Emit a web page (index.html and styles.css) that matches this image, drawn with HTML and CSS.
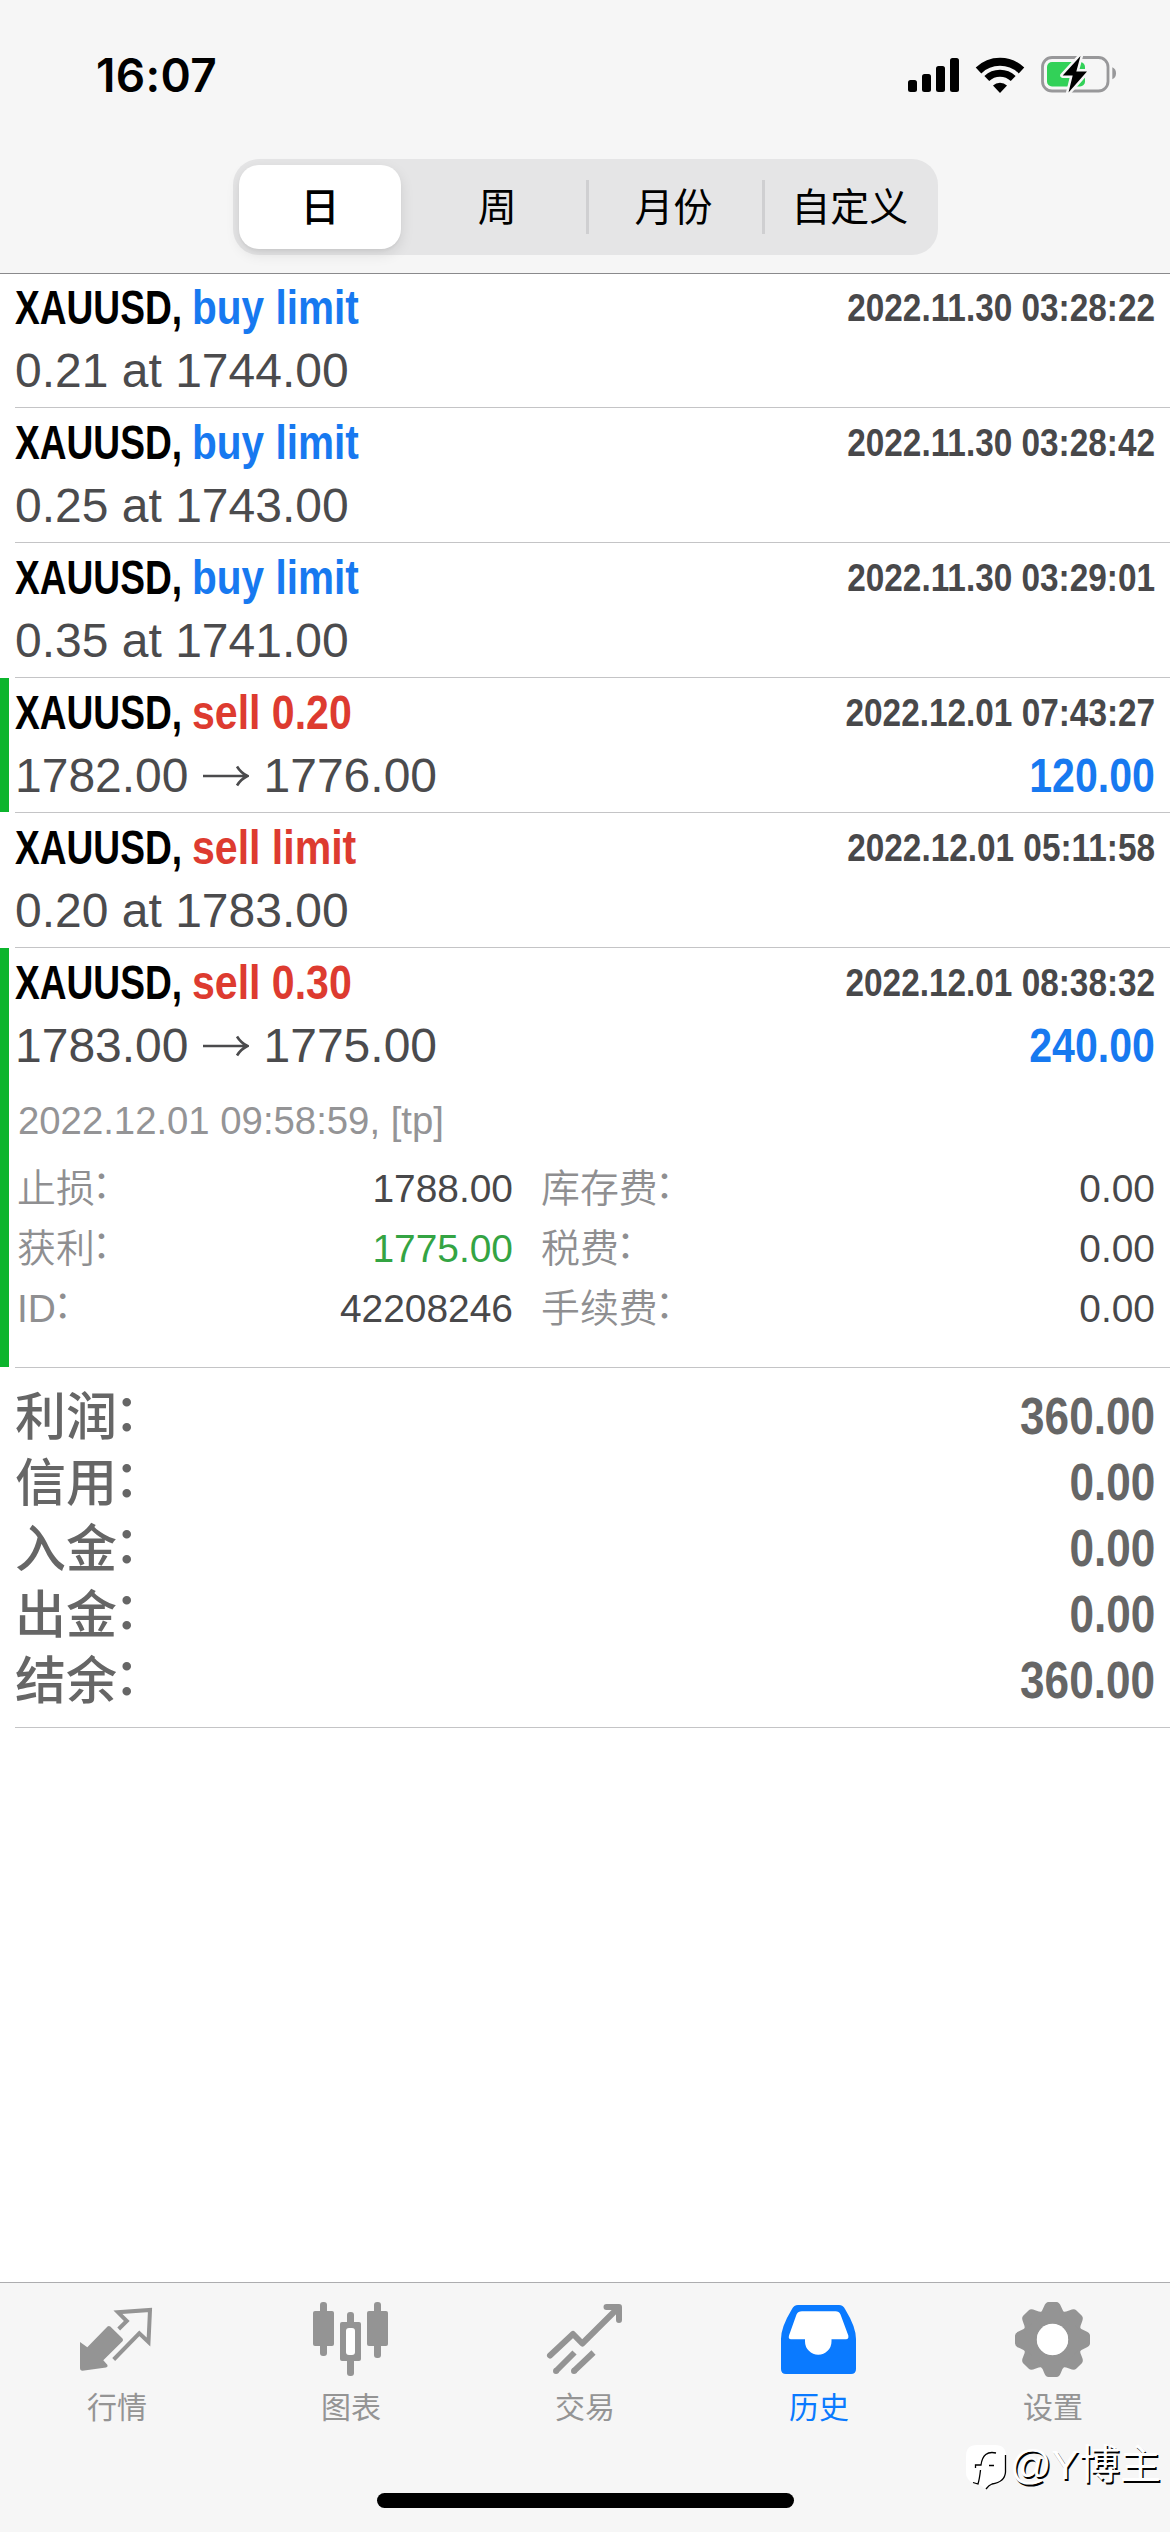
FILE: index.html
```html
<!DOCTYPE html>
<html lang="zh-CN">
<head>
<meta charset="utf-8">
<title>历史</title>
<link rel="stylesheet" href="styles.css">
</head>
<body>
<div class="screen">
  <header class="header">
    <div class="status">
      <span class="clock">16:07</span>
      <div class="status-icons">
        <svg class="signal" viewBox="0 0 52 36" width="52" height="36"><rect x="0" y="23" width="9" height="12" rx="2.5"/><rect x="14" y="17" width="9" height="18" rx="2.5"/><rect x="28" y="9" width="9" height="26" rx="2.5"/><rect x="42" y="1" width="9" height="34" rx="2.5"/></svg>
        <svg class="wifi" viewBox="0 0 50 38" width="50" height="38"><path d="M3.5 14.5A31 31 0 0 1 46.500 14.500" fill="none" stroke="#000" stroke-width="8"/><path d="M11.800 22.500A19 19 0 0 1 38.200 22.500" fill="none" stroke="#000" stroke-width="7"/><path d="M18 29.500A10 10 0 0 1 32 29.500L25 37Z"/></svg>
        <svg class="battery" viewBox="0 0 80 42" width="80" height="42"><rect x="3.500" y="3.500" width="65.500" height="33.500" rx="9.500" fill="none" stroke="#98989a" stroke-width="2.800"/><rect x="8" y="8" width="38" height="24.500" rx="5" fill="#32d158"/><path d="M73.300 13.300C78.300 15 78.300 23.600 73.300 25.300Z" fill="#98989a"/><path d="M41.500 2L23.700 21.500H33.700L29.500 38.500L48 17.500H37.300Z" stroke="#f6f6f6" stroke-width="5" stroke-linejoin="round"/><path d="M41.500 2L23.700 21.500H33.700L29.500 38.500L48 17.500H37.300Z"/></svg>
      </div>
    </div>
    <nav class="segments">
      <span class="segment selected">日</span>
      <span class="segment">周</span>
      <span class="segment divided">月份</span>
      <span class="segment divided">自定义</span>
    </nav>
  </header>

  <main class="content">
    <article class="deal first">
      <div class="body">
        <div class="line top"><span class="symbol">XAUUSD,</span><span class="kind buy">buy limit</span><time>2022.11.30 03:28:22</time></div>
        <div class="line price">0.21 at 1744.00</div>
      </div>
    </article>
    <article class="deal">
      <div class="body">
        <div class="line top"><span class="symbol">XAUUSD,</span><span class="kind buy">buy limit</span><time>2022.11.30 03:28:42</time></div>
        <div class="line price">0.25 at 1743.00</div>
      </div>
    </article>
    <article class="deal">
      <div class="body">
        <div class="line top"><span class="symbol">XAUUSD,</span><span class="kind buy">buy limit</span><time>2022.11.30 03:29:01</time></div>
        <div class="line price">0.35 at 1741.00</div>
      </div>
    </article>
    <article class="deal won">
      <div class="body">
        <div class="line top"><span class="symbol">XAUUSD,</span><span class="kind sell">sell 0.20</span><time>2022.12.01 07:43:27</time></div>
        <div class="line price"><span>1782.00</span><svg class="arrow" viewBox="0 0 46 24" width="46" height="24"><path d="M0 12H44M34 2.500Q38 9 44.500 12Q38 15 34 21.500"/></svg><span>1776.00</span><b class="profit">120.00</b></div>
      </div>
    </article>
    <article class="deal">
      <div class="body">
        <div class="line top"><span class="symbol">XAUUSD,</span><span class="kind sell">sell limit</span><time>2022.12.01 05:11:58</time></div>
        <div class="line price">0.20 at 1783.00</div>
      </div>
    </article>
    <article class="deal won open">
      <div class="body">
        <div class="line top"><span class="symbol">XAUUSD,</span><span class="kind sell">sell 0.30</span><time>2022.12.01 08:38:32</time></div>
        <div class="line price"><span>1783.00</span><svg class="arrow" viewBox="0 0 46 24" width="46" height="24"><path d="M0 12H44M34 2.500Q38 9 44.500 12Q38 15 34 21.500"/></svg><span>1775.00</span><b class="profit">240.00</b></div>
        <div class="closed">2022.12.01 09:58:59, [tp]</div>
        <dl class="details">
          <div><dt>止损<i>：</i></dt><dd>1788.00</dd></div>
          <div><dt>库存费<i>：</i></dt><dd>0.00</dd></div>
          <div><dt>获利<i>：</i></dt><dd class="hit">1775.00</dd></div>
          <div><dt>税费<i>：</i></dt><dd>0.00</dd></div>
          <div><dt>ID<i>：</i></dt><dd>42208246</dd></div>
          <div><dt>手续费<i>：</i></dt><dd>0.00</dd></div>
        </dl>
      </div>
    </article>
    <dl class="totals">
      <div><dt>利润<i>：</i></dt><dd>360.00</dd></div>
      <div><dt>信用<i>：</i></dt><dd>0.00</dd></div>
      <div><dt>入金<i>：</i></dt><dd>0.00</dd></div>
      <div><dt>出金<i>：</i></dt><dd>0.00</dd></div>
      <div><dt>结余<i>：</i></dt><dd>360.00</dd></div>
    </dl>
  </main>

  <footer class="footer">
    <nav class="tabs">
      <a class="tab">
        <svg viewBox="0 0 80 80" width="80" height="80"><path d="M3 42L10.300 47.300L30.500 26.500Q31.900 25.300 33.300 26.500L45.500 38.500Q46.600 40 45.500 41.300L26.300 60.300L30.500 65Q31 67 29 67.500L5.500 70.700Q3 70.700 3 68Z" fill="currentColor"/><path d="M41.700 29L49.800 21L41 12.300L73 10L71.500 42L62.300 33.300L36.700 59.500" fill="none" stroke="currentColor" stroke-width="4"/></svg>
        <span>行情</span>
      </a>
      <a class="tab">
        <svg viewBox="0 0 80 80" width="80" height="80" fill="currentColor"><rect x="9" y="2" width="7" height="54" rx="3"/><rect x="2" y="11" width="21" height="35" rx="2"/><rect x="63" y="2" width="7" height="56" rx="3"/><rect x="56" y="11" width="21" height="35" rx="2"/><rect x="36" y="12" width="7" height="20" rx="3"/><rect x="36" y="56" width="7" height="20" rx="3"/><rect x="29" y="22" width="21" height="39" rx="2"/><rect x="35" y="28" width="9" height="27" rx="3" fill="#fff"/></svg>
        <span>图表</span>
      </a>
      <a class="tab">
        <svg viewBox="0 0 80 80" width="80" height="80" fill="none" stroke="currentColor" stroke-width="6" stroke-linejoin="round"><path d="M5 55.500L28 34L37.300 43.500L73 8" stroke-linecap="round"/><path d="M61.500 7H74V20" stroke-linecap="round"/><path d="M11 71L29.500 52.500M29 71L48.500 52.500"/><path d="M11 71h.01M29 71h.01" stroke-linecap="round"/></svg>
        <span>交易</span>
      </a>
      <a class="tab active">
        <svg viewBox="0 0 80 80" width="80" height="80"><path d="M19 5H60Q64 5 66 9Q77 27 77 39V69Q77 74 72 74H7Q2 74 2 69V39Q2 27 13 9Q15 5 19 5Z" fill="currentColor"/><path d="M23 11.300H56.500Q60 11.300 61.500 14.500L69.300 35.500Q70 39.300 67 39.300H52.500V41.500A13.200 13.200 0 0 1 26 41.500V39.300H12Q9 39.300 10 35.500L17.500 14.500Q19 11.300 23 11.300Z" fill="#fff"/></svg>
        <span>历史</span>
      </a>
      <a class="tab">
        <svg viewBox="-39.500 -39.500 80 80" width="80" height="80" fill="currentColor"><defs><path id="tooth" d="M-13 -26Q-10 -28.500 -8.500 -33Q-6.800 -37.500 -4 -37.500H4Q6.800 -37.500 8.500 -33Q10 -28.500 13 -26Z"/></defs><circle r="22.500" fill="none" stroke="currentColor" stroke-width="14"/><use href="#tooth"/><use href="#tooth" transform="rotate(45)"/><use href="#tooth" transform="rotate(90)"/><use href="#tooth" transform="rotate(135)"/><use href="#tooth" transform="rotate(180)"/><use href="#tooth" transform="rotate(225)"/><use href="#tooth" transform="rotate(270)"/><use href="#tooth" transform="rotate(315)"/><circle r="15.700" fill="#fff"/></svg>
        <span>设置</span>
      </a>
    </nav>
    <div class="home-bar"></div>
    <div class="watermark">
      <svg viewBox="0 0 42 48" width="42" height="48"><path d="M12 2H30Q41 2 41 13V29Q41 41 27 42L20 46L14 41Q1 40 1 29V13Q1 2 12 2Z" fill="#fff"/><path d="M40.500 12V29Q40 39 27 41Q24 42 21 46M31 10Q18 7 16 22H10.500V25M24 22.500H29M15.500 27Q14.500 36 13 41L8 39.500" fill="none" stroke="#000" stroke-width="1.300"/></svg>
      <span>@Y博主</span>
    </div>
  </footer>
</div>
</body>
</html>
```

FILE: styles.css
```css
* { box-sizing: border-box; }

body {
  margin: 0;
  background: #fff;
  font-family: "Liberation Sans", "Noto Sans CJK SC", sans-serif;
}

dl, dd { margin: 0; }

.screen {
  display: flex;
  flex-direction: column;
  width: 1170px;
  height: 2532px;
  overflow: hidden;
}

/* header */
.header {
  height: 274px;
  background: #f6f6f6;
  border-bottom: 1px solid #8a8a8c;
}

.status {
  display: flex;
  justify-content: space-between;
  align-items: center;
  height: 159px;
  padding: 0 51px 9px 96px;
}

.clock {
  font: 600 46px/50px Inter, sans-serif;
  letter-spacing: 0.3px;
}

.status-icons {
  display: flex;
  align-items: center;
}

.signal { margin-right: 15px; }
.wifi { margin-right: 14px; }

.segments {
  display: grid;
  grid-template-columns: repeat(4, 1fr);
  width: 705px;
  height: 96px;
  margin-left: 233px;
  border-radius: 26px;
  background: #e5e5e6;
}

.segment {
  display: flex;
  justify-content: center;
  align-items: center;
  padding-top: 2px;
  font-size: 39px;
  line-height: 60px;
}

.selected {
  margin: 6px 8px 6px 6px;
  border-radius: 20px;
  background: #fff;
  font-weight: 500;
  box-shadow: 0 5px 14px rgba(0, 0, 0, 0.1), 0 2px 3px rgba(0, 0, 0, 0.04);
}

.divided {
  background: linear-gradient(#cfcfd1, #cfcfd1) left center / 3px 54px no-repeat;
}

/* deals */
.content { flex: 1; }

.deal {
  display: flex;
  height: 135px;
  padding-left: 15px;
}

.deal.first { height: 134px; }

.won {
  background: linear-gradient(#0cb52d, #0cb52d) left top / 9px calc(100% - 1px) no-repeat;
}

.deal.open { height: 420px; }

.body {
  flex: 1;
  padding: 4px 15px 0 0;
  border-bottom: 1px solid #c4c4c6;
}

.first .body { padding-top: 3px; }

.line {
  display: flex;
  align-items: center;
  white-space: nowrap;
}

.top {
  height: 62px;
  font-size: 48px;
  line-height: 62px;
  font-weight: 700;
}

.symbol {
  width: 177px;
  transform: scaleX(0.773);
  transform-origin: left;
}

.kind {
  transform: scaleX(0.845);
  transform-origin: left;
}

.buy { color: #1779f0; }

.sell {
  color: #dd3b30;
  transform: scaleX(0.855);
}

time {
  margin-left: auto;
  color: #48484a;
  font-size: 39px;
  transform: scaleX(0.855);
  transform-origin: right;
}

.price {
  height: 64px;
  color: #4b4b4d;
  font-size: 48px;
  line-height: 64px;
}

.arrow {
  margin: 0 15px 0 14px;
  fill: none;
  stroke: #4b4b4d;
  stroke-width: 2.6;
}

.profit {
  margin-left: auto;
  color: #1779f0;
  transform: scaleX(0.855);
  transform-origin: right;
}

.closed {
  margin: 13px 0 8px 3px;
  color: #949496;
  font-size: 38.3px;
  line-height: 60px;
}

.details {
  display: grid;
  grid-template-columns: 496px 614px;
  column-gap: 28px;
  margin-left: 2px;
  font-size: 38.9px;
  line-height: 60px;
}

.details div, .totals div {
  display: flex;
  justify-content: space-between;
}

dt i {
  display: inline-block;
  font-style: normal;
  transform: translate(-3px, -4px);
}

.details dt {
  color: #8f8f91;
  font-weight: 350;
}

.details dd { color: #48484a; }
.details .hit { color: #34a443; }

.totals {
  height: 360px;
  margin-left: 15px;
  padding: 16px 15px 0 0;
  border-bottom: 1px solid #c4c4c6;
  color: #666;
  font-size: 51px;
  font-weight: 700;
  line-height: 66px;
}

.totals div { height: 66px; }

.totals dt {
  padding-top: 1px;
  font-weight: 500;
}

.totals dd {
  transform: scaleX(0.865);
  transform-origin: right;
}

/* bottom bar */
.footer {
  position: relative;
  height: 250px;
  background: #f6f6f6;
  border-top: 1px solid #adadaf;
}

.tabs {
  display: grid;
  grid-template-columns: repeat(5, 1fr);
  height: 210px;
  padding-top: 17px;
}

.tab {
  display: flex;
  flex-direction: column;
  align-items: center;
  color: #949494;
  font-size: 30px;
  line-height: 40px;
}

.tab span { margin-top: 8px; }
.active { color: #0a7aff; }

.home-bar {
  width: 417px;
  height: 15px;
  margin: 0 auto;
  border-radius: 8px;
  background: #000;
}

.watermark {
  position: absolute;
  left: 965px;
  top: 160px;
  display: flex;
  align-items: center;
  color: #fff;
  font-size: 41px;
  line-height: 48px;
  text-shadow: 1.5px 1.5px 0 #000;
}

.watermark span { margin: -4px 0 0 3px; }
```
